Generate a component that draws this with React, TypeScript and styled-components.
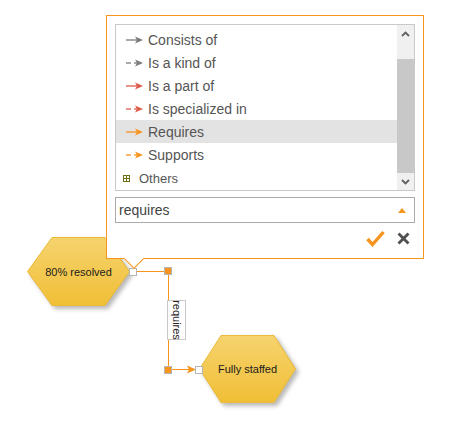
import styled, { createGlobalStyle } from 'styled-components';

const ORANGE = '#f7941d';
const RED = '#de5a48';
const GRAY = '#7a7a7a';

const GlobalStyle = createGlobalStyle`
  html, body {
    margin: 0;
    padding: 0;
    background: #ffffff;
  }
  body {
    font-family: "Liberation Sans", Arial, sans-serif;
  }
`;

type Relation = {
  label: string;
  color: string;
  dashed: boolean;
};

const relations: Relation[] = [
  { label: 'Consists of', color: GRAY, dashed: false },
  { label: 'Is a kind of', color: GRAY, dashed: true },
  { label: 'Is a part of', color: RED, dashed: false },
  { label: 'Is specialized in', color: RED, dashed: true },
  { label: 'Requires', color: ORANGE, dashed: false },
  { label: 'Supports', color: ORANGE, dashed: true },
];

const ArrowIcon = ({ color, dashed }: { color: string; dashed: boolean }) => (
  <svg width="17" height="8" viewBox="0 0 17 8">
    {dashed ? (
      <>
        <line x1="0" y1="4" x2="5" y2="4" stroke={color} strokeWidth="1.3" />
        <line x1="8" y1="4" x2="11" y2="4" stroke={color} strokeWidth="1.3" />
      </>
    ) : (
      <line x1="0" y1="4" x2="12" y2="4" stroke={color} strokeWidth="1.3" />
    )}
    <polygon points="9,0.5 17,4 9,7.5 11,4" fill={color} />
  </svg>
);

const Chevron = ({ up }: { up: boolean }) => (
  <svg width="9" height="6" viewBox="0 0 9 6">
    <polyline
      points={up ? '1,5 4.5,1.5 8,5' : '1,1 4.5,4.5 8,1'}
      fill="none"
      stroke="#606060"
      strokeWidth="1.8"
    />
  </svg>
);

const Hexagon = ({ w, h, inset, id }: { w: number; h: number; inset: number; id: string }) => (
  <HexSvg width={w + 6} height={h + 6} viewBox={`0 0 ${w + 6} ${h + 6}`}>
    <defs>
      <linearGradient id={id} x1="0" y1="0" x2="0" y2="1">
        <stop offset="0" stopColor="#f6d36e" />
        <stop offset="1" stopColor="#f0bf36" />
      </linearGradient>
    </defs>
    <polygon
      points={`0.5,${h / 2} ${inset},0.5 ${w - inset},0.5 ${w - 0.5},${h / 2} ${w - inset},${h - 0.5} ${inset},${h - 0.5}`}
      fill={`url(#${id})`}
      stroke="#e9b937"
      strokeWidth="1"
    />
  </HexSvg>
);

const App = () => {
  return (
    <>
      <GlobalStyle />
      <Canvas>
        <Wires width="453" height="423" viewBox="0 0 453 423">
          <line x1="136" y1="271.5" x2="164" y2="271.5" stroke={ORANGE} strokeWidth="1" />
          <line x1="168.5" y1="275" x2="168.5" y2="366" stroke={ORANGE} strokeWidth="1" />
          <line x1="172" y1="369.5" x2="190" y2="369.5" stroke={ORANGE} strokeWidth="1" />
          <polygon points="187,365.5 196,369.5 187,373.5 189,369.5" fill={ORANGE} />
        </Wires>

        <Node $x={27} $y={237} $w={103} $h={69}>
          <Hexagon w={103} h={69} inset={25} id="hexA" />
          <NodeText>80% resolved</NodeText>
        </Node>

        <Node $x={199} $y={335} $w={97} $h={68}>
          <Hexagon w={97} h={68} inset={22} id="hexB" />
          <NodeText>Fully staffed</NodeText>
        </Node>

        <Handle $x={129} $y={268} $fill="#ffffff" />
        <Handle $x={164} $y={267} $fill={ORANGE} />
        <Handle $x={164} $y={366} $fill={ORANGE} />
        <Handle $x={195} $y={366} $fill="#ffffff" />

        <EdgeLabel>
          <span>requires</span>
        </EdgeLabel>

        <Popup>
          <Pointer />
          <ListBox>
            <Items>
              {relations.map((r) => (
                <Item key={r.label} $active={r.label === 'Requires'}>
                  <ArrowIcon color={r.color} dashed={r.dashed} />
                  <span>{r.label}</span>
                </Item>
              ))}
              <GroupItem>
                <PlusBox />
                <span>Others</span>
              </GroupItem>
            </Items>
            <ScrollBar>
              <ScrollButton>
                <Chevron up />
              </ScrollButton>
              <Track>
                <Thumb />
              </Track>
              <ScrollButton>
                <Chevron up={false} />
              </ScrollButton>
            </ScrollBar>
          </ListBox>

          <Combo>
            <ComboText>requires</ComboText>
            <ComboCaret />
          </Combo>

          <Actions>
            <svg width="19" height="17" viewBox="0 0 19 17">
              <polyline
                points="1.5,9 6.5,14.5 17.5,2"
                fill="none"
                stroke={ORANGE}
                strokeWidth="3.4"
                strokeLinejoin="miter"
              />
            </svg>
            <svg width="13" height="13" viewBox="0 0 13 13">
              <line x1="1.5" y1="1.5" x2="11.5" y2="11.5" stroke="#505050" strokeWidth="2.8" />
              <line x1="11.5" y1="1.5" x2="1.5" y2="11.5" stroke="#505050" strokeWidth="2.8" />
            </svg>
          </Actions>
        </Popup>
      </Canvas>
    </>
  );
};

const Canvas = styled.div`
  position: relative;
  width: 453px;
  height: 423px;
  overflow: hidden;
  background: #ffffff;
`;

const Wires = styled.svg`
  position: absolute;
  left: 0;
  top: 0;
`;

const Node = styled.div<{ $x: number; $y: number; $w: number; $h: number }>`
  position: absolute;
  left: ${(p) => p.$x}px;
  top: ${(p) => p.$y}px;
  width: ${(p) => p.$w}px;
  height: ${(p) => p.$h}px;
  display: flex;
  align-items: center;
  justify-content: center;
`;

const HexSvg = styled.svg`
  position: absolute;
  left: 0;
  top: 0;
  filter: drop-shadow(3px 3px 2px rgba(0, 0, 0, 0.28));
`;

const NodeText = styled.span`
  position: relative;
  font-size: 11px;
  color: #1a1a1a;
`;

const Handle = styled.div<{ $x: number; $y: number; $fill: string }>`
  position: absolute;
  left: ${(p) => p.$x}px;
  top: ${(p) => p.$y}px;
  width: 6px;
  height: 6px;
  background: ${(p) => p.$fill};
  border: 1px solid #b5b5b5;
`;

const EdgeLabel = styled.div`
  position: absolute;
  left: 167px;
  top: 300px;
  width: 19px;
  height: 40px;
  border: 1px solid #c8c8c8;
  box-sizing: border-box;
  background: #ffffff;
  display: flex;
  align-items: center;
  justify-content: center;

  span {
    display: block;
    transform: rotate(90deg);
    font-size: 11px;
    color: #222;
    white-space: nowrap;
  }
`;

const Popup = styled.div`
  position: absolute;
  left: 106px;
  top: 15px;
  width: 300px;
  padding: 8px;
  padding-bottom: 11px;
  background: #ffffff;
  border: 1px solid ${ORANGE};
  display: flex;
  flex-direction: column;
  gap: 6px;
`;

const Pointer = styled.div`
  position: absolute;
  left: 20px;
  bottom: -8px;
  width: 13px;
  height: 13px;
  background: #ffffff;
  border-right: 1px solid ${ORANGE};
  border-bottom: 1px solid ${ORANGE};
  transform: rotate(45deg);
`;

const ListBox = styled.div`
  display: flex;
  height: 165px;
  border: 1px solid #c9c9c9;
`;

const Items = styled.div`
  flex: 1;
  padding-top: 3px;
  display: flex;
  flex-direction: column;
`;

const Item = styled.div<{ $active: boolean }>`
  height: 23px;
  display: flex;
  align-items: center;
  gap: 5px;
  padding-left: 10px;
  font-size: 14px;
  color: #555555;
  background: ${(p) => (p.$active ? '#e3e3e3' : 'transparent')};
`;

const GroupItem = styled.div`
  height: 24px;
  display: flex;
  align-items: center;
  gap: 9px;
  padding-left: 7px;
  font-size: 13px;
  color: #555555;
`;

const PlusBox = styled.span`
  position: relative;
  width: 5px;
  height: 5px;
  border: 1px solid #6e6e12;

  &::before,
  &::after {
    content: '';
    position: absolute;
    background: #6e6e12;
  }
  &::before {
    left: 0;
    top: 2px;
    width: 5px;
    height: 1px;
  }
  &::after {
    left: 2px;
    top: 0;
    width: 1px;
    height: 5px;
  }
`;

const ScrollBar = styled.div`
  width: 17px;
  display: flex;
  flex-direction: column;
  background: #f0f0f0;
`;

const ScrollButton = styled.div`
  height: 17px;
  display: flex;
  align-items: center;
  justify-content: center;
`;

const Track = styled.div`
  flex: 1;
  padding-top: 17px;
  display: flex;
`;

const Thumb = styled.div`
  flex: 1;
  background: #c8c8c8;
`;

const Combo = styled.div`
  height: 24px;
  border: 1px solid #aaaaaa;
  display: flex;
  align-items: center;
  justify-content: space-between;
  padding: 0 8px 0 3px;
`;

const ComboText = styled.span`
  font-size: 14px;
  color: #444444;
`;

const ComboCaret = styled.span`
  width: 0;
  height: 0;
  border-left: 4px solid transparent;
  border-right: 4px solid transparent;
  border-bottom: 5px solid ${ORANGE};
`;

const Actions = styled.div`
  display: flex;
  justify-content: flex-end;
  align-items: center;
  gap: 12px;
  padding-right: 5px;
  height: 18px;
`;

export default App;
